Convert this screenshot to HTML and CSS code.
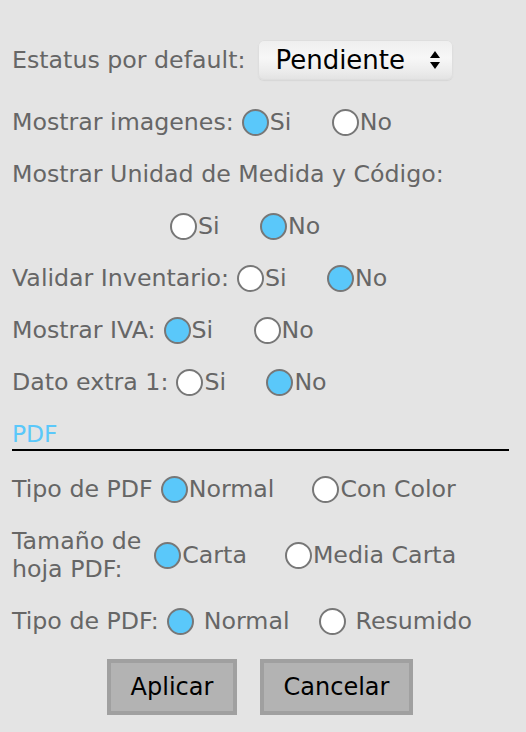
FILE: index.html
```html
<!DOCTYPE html>
<html lang="es">
<head>
<meta charset="utf-8">
<link rel="stylesheet" href="styles.css">
</head>
<body>
<div class="panel">
  <div class="row first">
    <span class="label">Estatus por default:</span>
    <div class="select"><span>Pendiente</span>
      <svg class="arrows" width="12" height="20" viewBox="0 0 12 20"><path d="M6 1 L11 8 L1 8 Z" fill="#000"/><path d="M6 19 L11 12 L1 12 Z" fill="#000"/></svg>
    </div>
  </div>
  <div class="row">
    <span class="label">Mostrar imagenes:</span>
    <span class="opt w90"><span class="radio on"></span>Si</span>
    <span class="opt"><span class="radio"></span>No</span>
  </div>
  <div class="row">
    <span class="label">Mostrar Unidad de Medida y Código:</span>
  </div>
  <div class="row indent">
    <span class="opt w90"><span class="radio"></span>Si</span>
    <span class="opt"><span class="radio on"></span>No</span>
  </div>
  <div class="row">
    <span class="label">Validar Inventario:</span>
    <span class="opt w90"><span class="radio"></span>Si</span>
    <span class="opt"><span class="radio on"></span>No</span>
  </div>
  <div class="row">
    <span class="label">Mostrar IVA:</span>
    <span class="opt w90"><span class="radio on"></span>Si</span>
    <span class="opt"><span class="radio"></span>No</span>
  </div>
  <div class="row">
    <span class="label">Dato extra 1:</span>
    <span class="opt w90"><span class="radio"></span>Si</span>
    <span class="opt"><span class="radio on"></span>No</span>
  </div>
  <div class="section">PDF</div>
  <div class="row pdf1">
    <span class="label">Tipo de PDF</span>
    <span class="opt m40"><span class="radio on"></span>Normal</span>
    <span class="opt"><span class="radio"></span>Con Color</span>
  </div>
  <div class="row tall">
    <span class="label two">Tamaño de<br>hoja PDF:</span>
    <span class="opt m40"><span class="radio on"></span>Carta</span>
    <span class="opt"><span class="radio"></span>Media Carta</span>
  </div>
  <div class="row last">
    <span class="label">Tipo de PDF:</span>
    <span class="opt sp m29"><span class="radio on"></span>Normal</span>
    <span class="opt sp"><span class="radio"></span>Resumido</span>
  </div>
  <div class="buttons">
    <button class="btn apply">Aplicar</button>
    <button class="btn cancel">Cancelar</button>
  </div>
</div>
</body>
</html>
```
FILE: styles.css
```css
html, body {
  margin: 0;
  padding: 0;
  background: #e4e4e4;
}
body {
  width: 526px;
  height: 732px;
  overflow: hidden;
  font-family: "DejaVu Sans", Verdana, sans-serif;
  font-size: 23.7px;
  color: #666;
}
.panel {
  padding: 40px 18px 0 12px;
}
.row {
  display: flex;
  align-items: center;
  height: 40px;
  margin-top: 12px;
  white-space: nowrap;
}
.row.first {
  margin-top: 0;
  margin-bottom: 22px;
}
.row.first + .row {
  margin-top: 22px;
}
.label {
  margin-right: 8px;
  flex-shrink: 0;
}
.select {
  flex-shrink: 0;
  margin-left: 5px;
  width: 195px;
  height: 40px;
  box-sizing: border-box;
  border-radius: 6px;
  background: linear-gradient(#eeeeee, #f7f7f7 45%, #ebebeb 80%, #e2e2e2);
  box-shadow: inset 0 0 0 1px #dedede, 0 1px 1px #d6d6d6;
  display: flex;
  align-items: center;
  justify-content: space-between;
  padding: 0 12px 0 17px;
  color: #000;
  font-size: 26px;
}
.arrows {
  display: block;
}
.opt {
  display: inline-flex;
  align-items: center;
  flex-shrink: 0;
}
.w90 {
  width: 90px;
}
.m40 {
  margin-right: 38px;
}
.m29 {
  margin-right: 29px;
}
.radio {
  display: inline-block;
  flex-shrink: 0;
  width: 27px;
  height: 27px;
  box-sizing: border-box;
  border: 2px solid #777;
  border-radius: 50%;
  background: #fff;
  margin-right: 1px;
}
.radio.on {
  background: #5ac8fa;
}
.sp .radio {
  margin-right: 10px;
}
.indent {
  padding-left: 158px;
}
.section {
  margin-top: 20px;
  color: #5ac8fa;
  font-size: 23.4px;
  line-height: 24px;
  padding-bottom: 3px;
  border-bottom: 2px solid #000;
  width: 497px;
}
.row.pdf1 {
  margin-top: 18px;
}
.row.tall {
  height: 56px;
  margin-top: 18px;
}
.two {
  line-height: 28px;
  margin-right: 13px;
}
.row.last {
  margin-top: 18px;
}
.buttons {
  display: flex;
  justify-content: center;
  gap: 23px;
  margin-top: 18px;
  margin-left: -12px;
  width: 526px;
}
.btn {
  height: 56px;
  box-sizing: border-box;
  background: #b3b3b3;
  border: 4px solid #a0a0a0;
  font-family: "DejaVu Sans", Verdana, sans-serif;
  font-size: 24px;
  color: #000;
  padding: 0;
}
.apply {
  width: 130px;
  margin-left: -6px;
}
.cancel {
  width: 153px;
}
```
